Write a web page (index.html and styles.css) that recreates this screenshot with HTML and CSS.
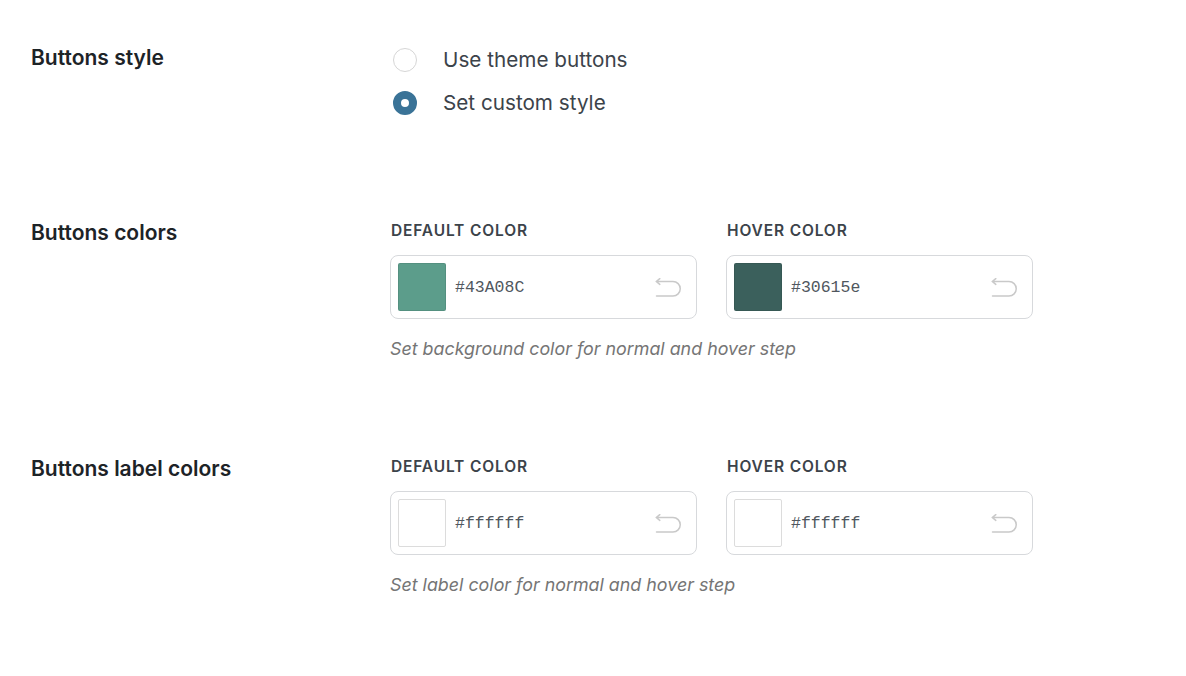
FILE: index.html
```html
<!DOCTYPE html>
<html lang="en">
<head>
<meta charset="utf-8">
<title>Buttons settings</title>
<link rel="stylesheet" href="styles.css">
</head>
<body>
<div class="page">
  <section class="row row-style">
    <h2 class="row-label">Buttons style</h2>
    <div class="options">
      <label class="option"><span class="radio"></span><span class="option-text">Use theme buttons</span></label>
      <label class="option"><span class="radio checked"></span><span class="option-text">Set custom style</span></label>
    </div>
  </section>

  <section class="row row-colors">
    <h2 class="row-label">Buttons colors</h2>
    <div class="content">
      <div class="fields">
        <div class="field">
          <div class="field-title">DEFAULT COLOR</div>
          <div class="picker">
            <span class="swatch swatch-green"></span>
            <span class="hex">#43A08C</span>
            <svg class="undo" width="26" height="19" viewBox="0 0 26 19"><path d="M4.8 0.6 L1.2 3.5 L4.8 6.4 M1.2 3.5 H18 A7.25 7.25 0 0 1 18 18 H1.5" fill="none" stroke="#c9c9c9" stroke-width="1.5" stroke-linecap="round" stroke-linejoin="round"/></svg>
          </div>
        </div>
        <div class="field">
          <div class="field-title">HOVER COLOR</div>
          <div class="picker">
            <span class="swatch swatch-dark"></span>
            <span class="hex">#30615e</span>
            <svg class="undo" width="26" height="19" viewBox="0 0 26 19"><path d="M4.8 0.6 L1.2 3.5 L4.8 6.4 M1.2 3.5 H18 A7.25 7.25 0 0 1 18 18 H1.5" fill="none" stroke="#c9c9c9" stroke-width="1.5" stroke-linecap="round" stroke-linejoin="round"/></svg>
          </div>
        </div>
      </div>
      <p class="help">Set background color for normal and hover step</p>
    </div>
  </section>

  <section class="row row-colors">
    <h2 class="row-label">Buttons label colors</h2>
    <div class="content">
      <div class="fields">
        <div class="field">
          <div class="field-title">DEFAULT COLOR</div>
          <div class="picker">
            <span class="swatch swatch-white"></span>
            <span class="hex">#ffffff</span>
            <svg class="undo" width="26" height="19" viewBox="0 0 26 19"><path d="M4.8 0.6 L1.2 3.5 L4.8 6.4 M1.2 3.5 H18 A7.25 7.25 0 0 1 18 18 H1.5" fill="none" stroke="#c9c9c9" stroke-width="1.5" stroke-linecap="round" stroke-linejoin="round"/></svg>
          </div>
        </div>
        <div class="field">
          <div class="field-title">HOVER COLOR</div>
          <div class="picker">
            <span class="swatch swatch-white"></span>
            <span class="hex">#ffffff</span>
            <svg class="undo" width="26" height="19" viewBox="0 0 26 19"><path d="M4.8 0.6 L1.2 3.5 L4.8 6.4 M1.2 3.5 H18 A7.25 7.25 0 0 1 18 18 H1.5" fill="none" stroke="#c9c9c9" stroke-width="1.5" stroke-linecap="round" stroke-linejoin="round"/></svg>
          </div>
        </div>
      </div>
      <p class="help">Set label color for normal and hover step</p>
    </div>
  </section>
</div>
</body>
</html>
```

FILE: styles.css
```css
* { box-sizing: border-box; }

body {
  margin: 0;
  background: #ffffff;
  font-family: Inter, "Noto Sans", "Liberation Sans", sans-serif;
  color: #1d2327;
}

.page {
  padding: 45px 0 0 31px;
}

.row {
  display: grid;
  grid-template-columns: 359px 1fr;
  align-items: start;
}

.row-colors { margin-top: 102px; }
.row-colors + .row-colors { margin-top: 95px; }

.row-label {
  margin: 1px 0 0;
  font-size: 21px;
  line-height: 24px;
  font-weight: 600;
  color: #1d2327;
}

.options {
  display: flex;
  flex-direction: column;
  gap: 13px;
}

.option {
  display: flex;
  align-items: center;
  height: 30px;
  margin-left: 3px;
}

.radio {
  width: 24px;
  height: 24px;
  border-radius: 50%;
  border: 1px solid #d6d6d6;
  background: #fff;
  flex: none;
}

.radio.checked {
  border: 8px solid #3a7397;
  background: #fff;
}

.option-text {
  margin-left: 26px;
  font-size: 20.7px;
  line-height: 30px;
  color: #3c434a;
}

.fields {
  display: flex;
  gap: 29px;
}

.field { width: 307px; }

.field-title {
  font-size: 15.5px;
  line-height: 20px;
  font-weight: 600;
  letter-spacing: 0.85px;
  color: #3c434a;
  margin-left: 1px;
  padding-top: 1px;
}

.picker {
  margin-top: 14px;
  height: 64px;
  border: 1px solid #d7d9dc;
  border-radius: 8px;
  display: flex;
  align-items: center;
  padding: 0 15px 0 7px;
}

.swatch {
  width: 48px;
  height: 48px;
  border-radius: 2px;
  border: 1px solid rgba(0, 0, 0, 0.08);
  flex: none;
}

.swatch-green { background: #5c9d8b; }
.swatch-dark { background: #3b605c; }
.swatch-white { background: #ffffff; border-color: #dcdcdc; }

.hex {
  margin-left: 9px;
  font-family: "Liberation Mono", "DejaVu Sans Mono", monospace;
  font-size: 16.5px;
  color: #50575e;
  flex: 1;
}

.undo { flex: none; display: block; }

.help {
  margin: 18px 0 0;
  font-size: 17.85px;
  line-height: 24px;
  font-style: italic;
  color: #757575;
}
```
